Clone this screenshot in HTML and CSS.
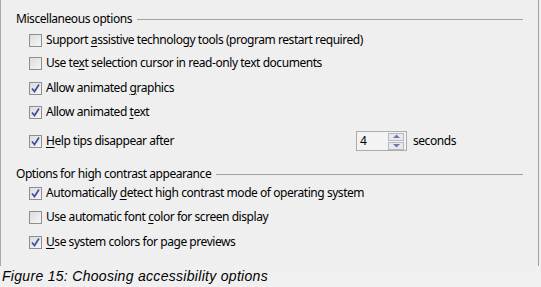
FILE: index.html
```html
<!DOCTYPE html>
<html lang="en">
<head>
<meta charset="UTF-8" />
<title>Accessibility options</title>
<link rel="stylesheet" href="styles.css">
</head>
<body>

<div class="panel">
  <div class="group-title"><span>Miscellaneous options</span><div class="rule"></div></div>

  <label class="row r1"><span class="box"></span><span>Support <u>a</u>ssistive technology tools (program restart required)</span></label>
  <label class="row r2"><span class="box"></span><span>Use te<u>x</u>t selection cursor in read-only text documents</span></label>
  <label class="row r3"><span class="box on"><svg width="11" height="11" viewBox="0 0 11 11"><path d="M2 5.5 L4.5 8.5 L9 1.5" /></svg></span><span>Allow animated <u>g</u>raphics</span></label>
  <label class="row r4"><span class="box on"><svg width="11" height="11" viewBox="0 0 11 11"><path d="M2 5.5 L4.5 8.5 L9 1.5" /></svg></span><span>Allow animated <u>t</u>ext</span></label>
  <div class="row r5">
    <label class="tip"><span class="box on"><svg width="11" height="11" viewBox="0 0 11 11"><path d="M2 5.5 L4.5 8.5 L9 1.5" /></svg></span><span><u>H</u>elp tips disappear after</span></label>
    <div class="spin">
      <span class="val">4</span>
      <div class="arrows">
        <span class="btn"><svg width="9" height="5" viewBox="0 0 9 5"><path d="M1 4 L4.5 0.5 L8 4 Z" /></svg></span>
        <span class="btn"><svg width="9" height="5" viewBox="0 0 9 5"><path d="M1 1 L8 1 L4.5 4.5 Z" /></svg></span>
      </div>
    </div>
    <span class="unit">seconds</span>
  </div>

  <div class="group-title g2"><span>Options for high contrast appearance</span><div class="rule"></div></div>

  <label class="row r6"><span class="box on"><svg width="11" height="11" viewBox="0 0 11 11"><path d="M2 5.5 L4.5 8.5 L9 1.5" /></svg></span><span>Automatically <u>d</u>etect high contrast mode of operating system</span></label>
  <label class="row r7"><span class="box"></span><span>Use automatic font <u>c</u>olor for screen display</span></label>
  <label class="row r8"><span class="box on"><svg width="11" height="11" viewBox="0 0 11 11"><path d="M2 5.5 L4.5 8.5 L9 1.5" /></svg></span><span><u>U</u>se system colors for page previews</span></label>
</div>

<p class="caption">Figure 15: Choosing accessibility options</p>

</body>
</html>
```

FILE: styles.css
```css
body, html { margin:0; padding:0; background:#f0f0f0; color:#000; }
.panel { width:537px; height:255px; padding-top:11px; box-sizing:content-box; background:#efefef; border-left:1px solid #a8a8a8; border-right:1px solid #a0a0a0; font-family:"Noto Sans", sans-serif; font-size:12px; letter-spacing:-0.45px; }
.group-title { display:flex; align-items:center; height:16px; line-height:16px; padding-left:15px; margin-right:15px; }
.group-title span { white-space:nowrap; }
.group-title .rule { flex:1; height:1px; background:#a0a0a0; margin-left:5px; }
.g2 { margin-top:15px; }
.row { display:flex; align-items:center; height:16px; line-height:16px; margin-left:28px; white-space:nowrap; }
.row u { text-decoration-thickness:1px; text-underline-offset:2px; }
.r1 { margin-top:5px; }
.r2 { margin-top:7px; }
.r3 { margin-top:9px; }
.r4 { margin-top:8px; }
.r5 { margin-top:11px; height:20px; }
.r6 { margin-top:3px; }
.r7 { margin-top:8px; }
.r8 { margin-top:9px; }
.tip { display:flex; align-items:center; width:327px; }
.box { width:11px; height:11px; border:1px solid #8e8f8f; margin-right:4px; background:linear-gradient(135deg, #dcdcdc, #f6f6f6); display:flex; align-items:center; justify-content:center; }
.box svg path { fill:none; stroke:#3d4f9e; stroke-width:1.7; }
.spin { display:flex; align-items:center; justify-content:space-between; width:49px; height:18px; border:1px solid #acacac; background:#f3f3f3; }
.spin .val { padding-left:3px; }
.arrows { display:flex; flex-direction:column; gap:1px; margin-right:2px; }
.btn { width:14px; height:6px; border:1px solid #b8b8c0; background:#e8e8ee; display:flex; align-items:center; justify-content:center; }
.btn svg path { fill:#6a7aa8; }
.unit { margin-left:6px; }
.caption { margin:0; padding:2px 0 0 2px; font-family:"Liberation Sans", Arial, sans-serif; font-style:italic; font-size:14px; letter-spacing:0.3px; color:#000; }
```
